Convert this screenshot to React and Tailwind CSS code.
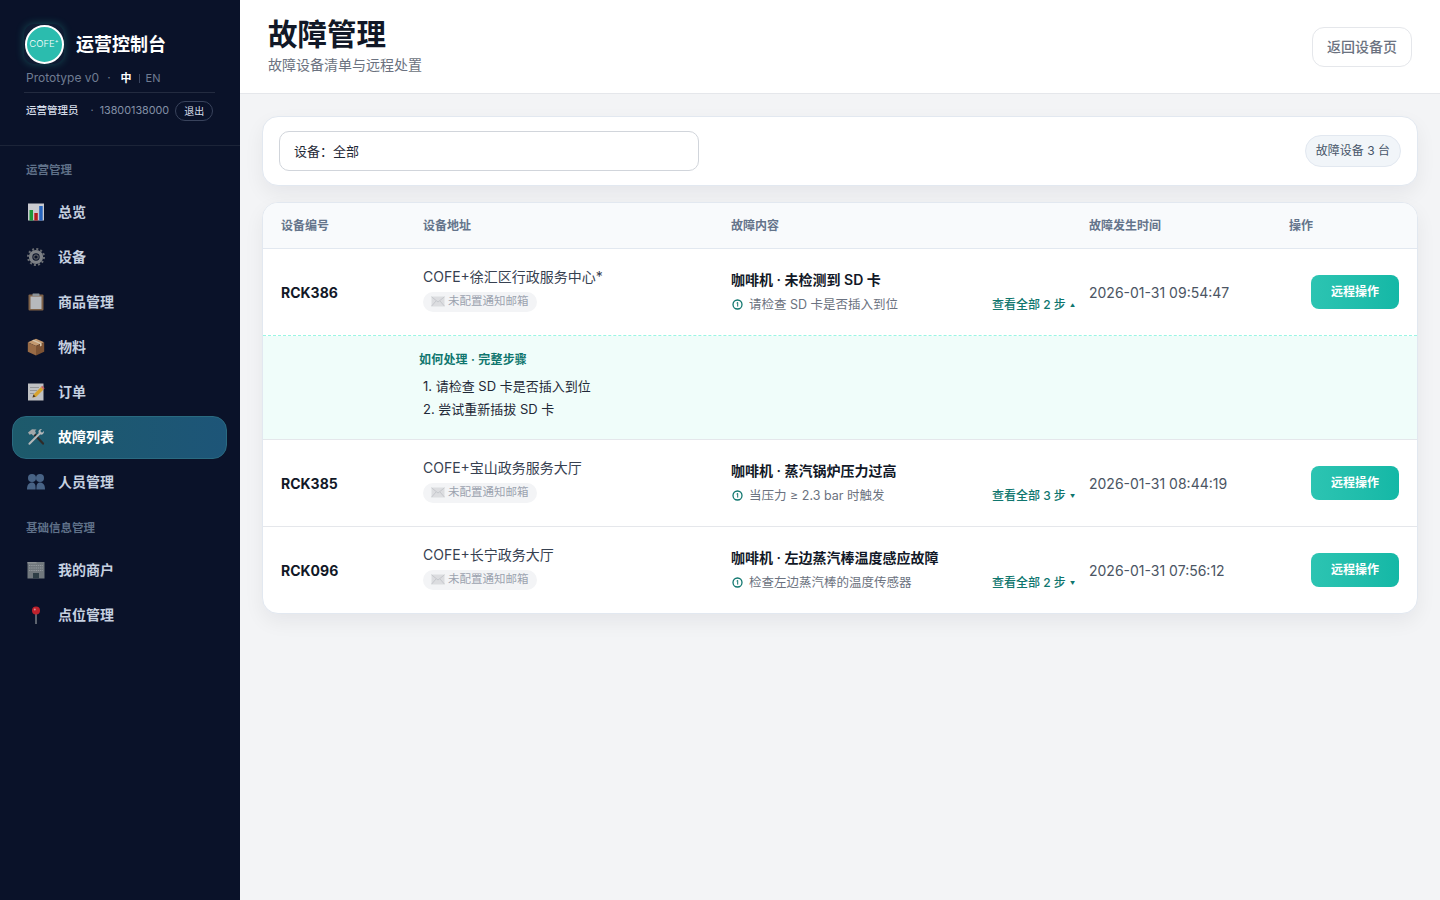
import React from 'react';

const FONT = "font-['Inter','Noto_Sans_CJK_SC',sans-serif]";

function ChartIcon() {
  return (
    <svg width="18" height="18" viewBox="0 0 18 18">
      <rect x="1" y="0.5" width="16" height="17" fill="#dfe0e3" />
      <rect x="2.5" y="7" width="3.5" height="10.5" fill="#1fa83a" />
      <rect x="7.3" y="10" width="3.5" height="7.5" fill="#c6201f" />
      <rect x="12.2" y="3" width="3.5" height="14.5" fill="#2b6fd0" />
    </svg>
  );
}

function GearIcon() {
  return (
    <svg width="18" height="18" viewBox="0 0 18 18">
      <circle cx="9" cy="9" r="5.4" fill="none" stroke="#8a8d90" strokeWidth="3.4" />
      <circle cx="9" cy="9" r="7.9" fill="none" stroke="#74777b" strokeWidth="2.2" strokeDasharray="2 2.14" />
      <circle cx="9" cy="9" r="2.2" fill="none" stroke="#5f6265" strokeWidth="1.2" />
    </svg>
  );
}

function ClipboardIcon() {
  return (
    <svg width="18" height="18" viewBox="0 0 18 18">
      <rect x="1.5" y="1.5" width="15" height="16" rx="1" fill="#8b6b4c" />
      <rect x="3.5" y="3.5" width="11" height="12.5" fill="#c9ccce" />
      <rect x="5.5" y="0.5" width="7" height="2.6" rx="0.6" fill="#9aa0a4" />
    </svg>
  );
}

function BoxIcon() {
  return (
    <svg width="18" height="18" viewBox="0 0 18 18">
      <path d="M9 0.8 17.2 4.2 9 8 0.8 4.2Z" fill="#d9a877" />
      <path d="M0.8 4.2 9 8V17.4L0.8 13.8Z" fill="#a9754a" />
      <path d="M17.2 4.2 9 8V17.4L17.2 13.8Z" fill="#8a5b36" />
      <path d="M5 2.4 13 6 13 8.6 14.6 7.8V5.2L6.6 1.7Z" fill="#ecd9bb" />
    </svg>
  );
}

function MemoIcon() {
  return (
    <svg width="18" height="18" viewBox="0 0 18 18">
      <rect x="1" y="0.5" width="15.5" height="17" fill="#d4d4d4" />
      <path d="M3 4.5H12M3 7.5H10M3 10.5H7" stroke="#9a9a9a" strokeWidth="0.8" />
      <path d="M5.5 14.5 6.5 11.5 14 4 16.5 6.5 9 14Z" fill="#eeb32f" />
      <path d="M14 4 15.2 2.8 17.6 5.3 16.5 6.5Z" fill="#d9686a" />
      <path d="M5.5 14.5 6.5 11.5 8.6 13.6Z" fill="#4b3a2a" />
    </svg>
  );
}

function ToolsIcon() {
  return (
    <svg width="18" height="18" viewBox="0 0 18 18" fill="none">
      <path d="M6.5 5.5 16 15.6" stroke="#2f2a28" strokeWidth="2.2" strokeLinecap="round" />
      <path d="M1 4.5 5 1.2 9.5 1.4 8 3 9 5 6.3 7.8 4.5 6 2.5 6.8Z" fill="#a4a8aa" />
      <path d="M12.5 5.8 2.4 15.8" stroke="#b5b8ba" strokeWidth="2" strokeLinecap="round" />
      <path d="M11.5 4.5C11 2.5 12.6 0.8 15 1L13.2 3 15 4.8 17 3C17.2 5.4 15.4 7 13.4 6.6Z" fill="#b5b8ba" />
    </svg>
  );
}

function PeopleIcon() {
  return (
    <svg width="18" height="18" viewBox="0 0 18 18" fill="#4f6c90">
      <circle cx="5" cy="5" r="4" />
      <circle cx="13" cy="5" r="4" />
      <path d="M0 16.5C0 11.5 2 9.5 5 9.5S8.6 11.5 8.6 16.5Z" />
      <path d="M9.4 16.5C9.4 11.5 10 9.5 13 9.5S18 11.5 18 16.5Z" />
    </svg>
  );
}

function BuildingIcon() {
  return (
    <svg width="18" height="18" viewBox="0 0 18 18">
      <rect x="0.5" y="1" width="17" height="16.5" fill="#7d8487" />
      <rect x="0.5" y="1" width="9" height="1.5" fill="#9a9ea0" />
      <path d="M2 4.5H16M2 7H16M2 9.5H16" stroke="#a3a8ab" strokeWidth="1" strokeDasharray="1.4 0.8" />
      <rect x="6" y="12" width="6" height="5.5" fill="#33434a" />
    </svg>
  );
}

function PinIcon() {
  return (
    <svg width="18" height="18" viewBox="0 0 18 18">
      <rect x="8.4" y="6" width="1.2" height="12" fill="#a4a8aa" />
      <circle cx="9" cy="4.6" r="4" fill="#d3232d" />
      <circle cx="7.8" cy="3.4" r="1" fill="#f29a9a" />
    </svg>
  );
}

function MailIcon() {
  return (
    <svg width="14" height="11" viewBox="0 0 14 11" className="shrink-0">
      <rect x="0.5" y="0.5" width="13" height="10" fill="#dcdde0" />
      <path d="M0.5 0.8 7 6 13.5 0.8M0.5 10.2 5 5M13.5 10.2 9 5" fill="none" stroke="#c3c5c9" strokeWidth="0.9" />
    </svg>
  );
}

function StepBadge() {
  return (
    <svg width="11" height="11" viewBox="0 0 11 11" fill="none" className="shrink-0 ml-[1px]">
      <circle cx="5.5" cy="5.5" r="4.5" stroke="#0f766e" strokeWidth="1.3" />
      <path d="M4.6 4 5.7 3.4V7.6" stroke="#0f766e" strokeWidth="1" />
    </svg>
  );
}

function NavItem({ icon, label, active }) {
  return (
    <div
      className={
        active
          ? 'flex items-center h-[43px] pl-[14px] gap-[13px] rounded-[14px] border border-[#2a6a80] bg-gradient-to-r from-[#1d5a6b] to-[#1d5578] text-white'
          : 'flex items-center h-[43px] pl-[15px] gap-[13px] text-[#c5d0e0]'
      }
    >
      <span className={active ? 'w-[18px] h-[18px] flex items-center justify-center mb-[2px]' : 'w-[18px] h-[18px] flex items-center justify-center opacity-90 mb-[2px]'}>{icon}</span>
      <span className="text-[14px] font-semibold leading-none mb-[2px]">{label}</span>
    </div>
  );
}

function SectionLabel({ children }) {
  return (
    <div className="h-[45px] pl-[14px] pt-[5px] flex items-center text-[11.5px] font-semibold text-[#5f7088]">{children}</div>
  );
}

function Sidebar() {
  return (
    <aside className="w-[240px] shrink-0 h-[900px] bg-[#0a1229]">
      <div className="h-[146px] border-b border-[#1c2438] pl-[24px] pr-[25px] pt-[24px]">
        <div className="flex items-center gap-[12px]">
          <div className="w-[40px] h-[40px] rounded-[10px] bg-[#0f1c33] shadow-[0_0_8px_rgba(45,212,191,0.3)] flex items-center justify-center">
            <div className="w-[39px] h-[39px] rounded-full bg-[#2bbcae] border-[2px] border-white flex items-center justify-center">
              <span className="text-white text-[9.5px] font-light">COFE⁺</span>
            </div>
          </div>
          <h1 className="text-[18px] font-bold text-white leading-none pt-[2px]">运营控制台</h1>
        </div>
        <div className="flex items-center h-[16px] mt-[6px] pl-[2px] text-[12px] text-[#6f7c92] leading-none">
          <span>Prototype v0</span>
          <span className="ml-[8px]">·</span>
          <span className="ml-[10px] text-white font-bold text-[11px]">中</span>
          <span className="ml-[7px] mr-[6px] w-px h-[9px] bg-[#3a4560]" />
          <span className="text-[11px]">EN</span>
        </div>
        <div className="h-px bg-[#232b40] mt-[6px]" />
        <div className="flex items-center mt-[8px] pl-[2px] text-[10.8px] leading-none">
          <span className="text-[#d5dce8] font-medium text-[10.5px] whitespace-nowrap shrink-0">运营管理员</span>
          <span className="ml-[12px] text-[#6f7c92]">·</span>
          <span className="ml-[6px] text-[#8390a6]">13800138000</span>
          <span className="ml-[6px] w-[38px] h-[20px] rounded-full border border-[#39435c] text-[#d5dce8] text-[10px] flex items-center justify-center shrink-0">退出</span>
        </div>
      </div>
      <nav className="pl-[12px] pr-[13px]">
        <SectionLabel>运营管理</SectionLabel>
        <div className="flex flex-col gap-[2px]">
          <NavItem icon={<ChartIcon />} label="总览" />
          <NavItem icon={<GearIcon />} label="设备" />
          <NavItem icon={<ClipboardIcon />} label="商品管理" />
          <NavItem icon={<BoxIcon />} label="物料" />
          <NavItem icon={<MemoIcon />} label="订单" />
          <NavItem icon={<ToolsIcon />} label="故障列表" active />
          <NavItem icon={<PeopleIcon />} label="人员管理" />
        </div>
        <SectionLabel>基础信息管理</SectionLabel>
        <div className="flex flex-col gap-[2px]">
          <NavItem icon={<BuildingIcon />} label="我的商户" />
          <NavItem icon={<PinIcon />} label="点位管理" />
        </div>
      </nav>
    </aside>
  );
}

const GRID = 'grid grid-cols-[142px_308px_358px_200px_1fr] items-center pl-[18px]';

function FaultRow({ id, address, title, step, more, arrow, time, rowClass }) {
  return (
    <div className={`${GRID} ${rowClass}`}>
      <div className="text-[14px] font-bold text-[#111827]">{id}</div>
      <div className="mb-[4px]">
        <div className="text-[14px] leading-[20px] text-[#374151]">{address}</div>
        <div className="mt-[5px] inline-flex items-center gap-[3px] h-[20px] px-[8px] rounded-full bg-[#f3f4f6] text-[11.5px] text-[#9ca3af]">
          <MailIcon />
          未配置通知邮箱
        </div>
      </div>
      <div className="pr-[14px] mb-[1px]">
        <div className="text-[14px] leading-[20px] font-semibold text-[#111827]">{title}</div>
        <div className="mt-[6px] flex items-center justify-between text-[12px] leading-[18px]">
          <span className="flex items-center gap-[6px] text-[#6b7280] text-[12.5px]">
            <StepBadge />
            {step}
          </span>
          <span className="flex items-center gap-[4px] text-[#0f766e] font-medium">
            {more}
            <span className="text-[5px]">{arrow}</span>
          </span>
        </div>
      </div>
      <div className="text-[14px] text-[#4b5563]">{time}</div>
      <div className="flex justify-end pr-[18px]">
        <button className="w-[88px] h-[34px] rounded-[8px] bg-gradient-to-r from-[#2cc4b2] to-[#14b8a6] text-white text-[12px] font-semibold">远程操作</button>
      </div>
    </div>
  );
}

export default function App() {
  return (
    <div className={`flex h-[900px] overflow-hidden bg-[#f3f4f6] ${FONT}`}>
      <Sidebar />
      <main className="flex-1 min-w-0">
        <header className="h-[94px] bg-white border-b border-[#e5e7eb] pl-[28px] pr-[28px] flex items-center justify-between">
          <div className="mb-[3px]">
            <div className="text-[29.5px] font-bold leading-[36px] text-[#111827]">故障管理</div>
            <div className="mt-[3px] text-[14px] leading-[20px] text-[#6b7280]">故障设备清单与远程处置</div>
          </div>
          <button className="w-[100px] h-[40px] rounded-[12px] border border-[#e5e7eb] bg-white text-[14px] font-medium text-[#6b7280]">返回设备页</button>
        </header>
        <div className="px-[22px] pt-[22px]">
          <section className="h-[70px] rounded-[16px] bg-white border border-[#e2e8f0] shadow-[0_8px_20px_rgba(15,23,42,0.06)] pl-[16px] pr-[16px] flex items-center justify-between">
            <div className="w-[420px] h-[40px] rounded-[10px] border border-[#d1d5db] pl-[14px] pt-[1px] flex items-center text-[13px] text-[#1f2937]">设备：全部</div>
            <div className="h-[32px] px-[10px] rounded-full border border-[#e2e8f0] bg-[#f1f5f9] flex items-center text-[12px] text-[#475569]">故障设备 3 台</div>
          </section>
          <section className="mt-[16px] rounded-[16px] bg-white border border-[#e2e8f0] shadow-[0_8px_20px_rgba(15,23,42,0.06)] overflow-hidden">
            <div className={`${GRID} h-[46px] bg-[#f8fafc] border-b border-[#e2e8f0] text-[12px] font-semibold text-[#64748b]`}>
              <div>设备编号</div>
              <div>设备地址</div>
              <div>故障内容</div>
              <div>故障发生时间</div>
              <div>操作</div>
            </div>
            <FaultRow
              id="RCK386"
              address="COFE+徐汇区行政服务中心*"
              title="咖啡机 · 未检测到 SD 卡"
              step="请检查 SD 卡是否插入到位"
              more="查看全部 2 步"
              arrow="▲"
              time="2026-01-31 09:54:47"
              rowClass="h-[87px] border-b border-dashed border-[#99f6e4]"
            />
            <div className="h-[104px] bg-[#f0fdfa] border-b border-[#e5e7eb] pl-[156px] pt-[15px]">
              <div className="text-[12px] leading-[18px] font-semibold text-[#0f766e] tracking-[0.2px]">如何处理 · 完整步骤</div>
              <ol className="mt-[6px] pl-[4px] text-[13px] leading-[23px] text-[#1f2937]">
                <li>1. 请检查 SD 卡是否插入到位</li>
                <li>2. 尝试重新插拔 SD 卡</li>
              </ol>
            </div>
            <FaultRow
              id="RCK385"
              address="COFE+宝山政务服务大厅"
              title="咖啡机 · 蒸汽锅炉压力过高"
              step="当压力 ≥ 2.3 bar 时触发"
              more="查看全部 3 步"
              arrow="▼"
              time="2026-01-31 08:44:19"
              rowClass="h-[87px] border-b border-[#e5e7eb]"
            />
            <FaultRow
              id="RCK096"
              address="COFE+长宁政务大厅"
              title="咖啡机 · 左边蒸汽棒温度感应故障"
              step="检查左边蒸汽棒的温度传感器"
              more="查看全部 2 步"
              arrow="▼"
              time="2026-01-31 07:56:12"
              rowClass="h-[86px]"
            />
          </section>
        </div>
      </main>
    </div>
  );
}
